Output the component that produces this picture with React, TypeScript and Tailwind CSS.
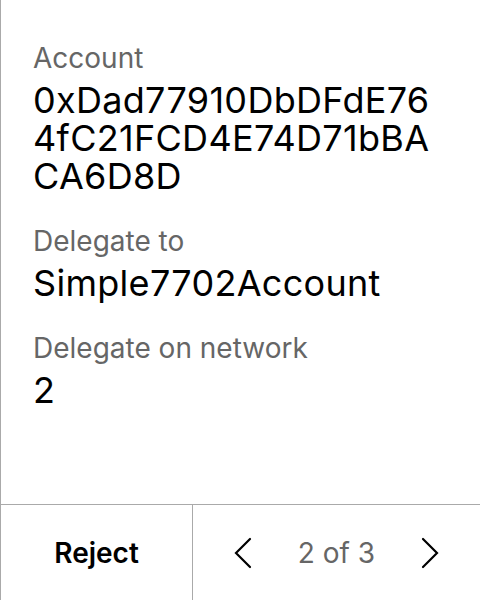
const rows = [
  { label: "Account", value: "0xDad77910DbDFdE764fC21FCD4E74D71bBACA6D8D" },
  { label: "Delegate to", value: "Simple7702Account" },
  { label: "Delegate on network", value: "2" },
];

function Chevron({ dir }: { dir: "left" | "right" }) {
  return (
    <svg width="18" height="32" viewBox="0 0 18 32" fill="none" stroke="currentColor" strokeWidth="2.2" strokeLinecap="round" strokeLinejoin="miter">
      {dir === "left" ? <polyline points="16,2 2,16 16,30" /> : <polyline points="2,2 16,16 2,30" />}
    </svg>
  );
}

export default function App() {
  return (
    <div className="flex h-[600px] w-[480px] flex-col border-l border-[#aaaaaa] bg-white font-['Inter',sans-serif] text-black">
      <div className="flex flex-1 flex-col gap-[29px] pl-[32px] pr-[40px] pt-[41px]">
        {rows.map((row) => (
          <div key={row.label} className="flex flex-col gap-[6px]">
            <div className="text-[28px] leading-[34px] text-[#666666]">{row.label}</div>
            <div className="break-all text-[36px] leading-[38px] tracking-[0.3px]">{row.value}</div>
          </div>
        ))}
      </div>
      <div className="flex h-[96px] border-t border-[#aaaaaa]">
        <button type="button" className="flex w-[192px] items-center justify-center border-r border-[#aaaaaa] text-[28px] font-semibold">
          Reject
        </button>
        <div className="flex flex-1 items-center justify-between px-[41px]">
          <Chevron dir="left" />
          <span className="text-[28px] text-[#666666]">2 of 3</span>
          <Chevron dir="right" />
        </div>
      </div>
    </div>
  );
}
